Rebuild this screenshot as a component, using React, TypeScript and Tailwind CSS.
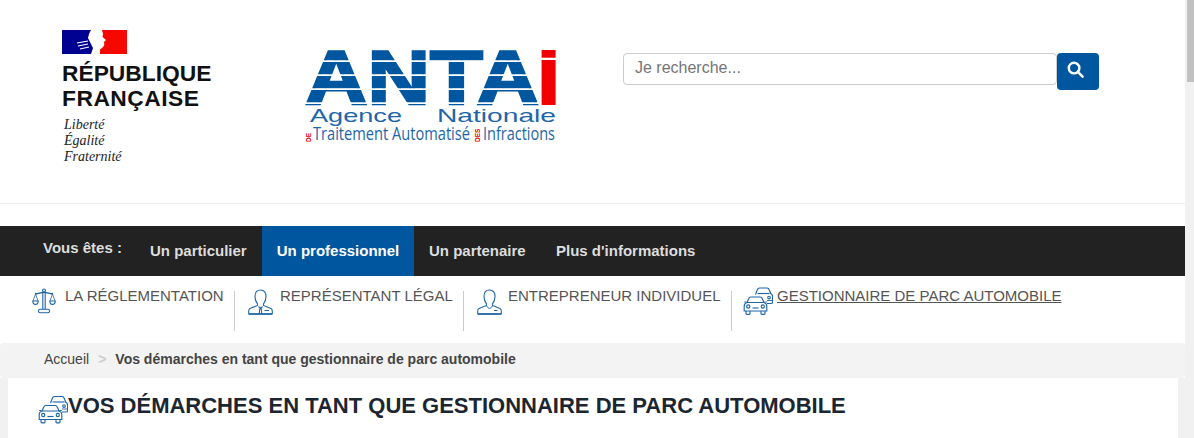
import React from "react";

const blue = "#0057a0";

function Scales({ className }: { className?: string }) {
  return (
    <svg viewBox="0 0 24 26" className={className} fill="none" stroke="#1f66a8" strokeWidth="1.1">
      <circle cx="12" cy="2.5" r="1.5" />
      <path d="M3 5.5 C7 6.5 9 4.2 12 4.2 C15 4.2 17 6.5 21 5.5" strokeWidth="1.4" />
      <path d="M10.8 5 L10.8 21 M13.2 5 L13.2 21" />
      <path d="M3.5 6 L1 13 M3.5 6 L6 13 M20.5 6 L18 13 M20.5 6 L23 13" strokeWidth="0.8" />
      <path d="M0.8 13 H6.2 C6.2 17.5 0.8 17.5 0.8 13Z M17.8 13 H23.2 C23.2 17.5 17.8 17.5 17.8 13Z" />
      <rect x="6.5" y="21.2" width="11" height="3.6" rx="1.6" />
    </svg>
  );
}

function Person({ tie, className }: { tie?: boolean; className?: string }) {
  return (
    <svg viewBox="0 0 25 26" className={className} fill="none" stroke="#1f66a8" strokeWidth="1.1">
      <path d="M12.5 1 C8.5 1 7 4 7 7.5 C7 11 8.5 13.5 9.5 14.8 V16.5 L2 19.5 C1 20 0.7 21 0.7 22 V25 H24.3 V22 C24.3 21 24 20 23 19.5 L15.5 16.5 V14.8 C16.5 13.5 18 11 18 7.5 C18 4 16.5 1 12.5 1Z" />
      {tie ? (
        <path d="M10.5 17.5 L12.5 19.5 L14.5 17.5 M11.2 25 L11.8 20 H13.2 L13.8 25 M16.5 21.5 H21" />
      ) : (
        <path d="M9.5 17 L12.5 20 L15.5 17 M17 21.5 H20.5" strokeWidth="1" />
      )}
      <path d="M1 25 H24" strokeWidth="1.6" />
    </svg>
  );
}

function Cars({ className }: { className?: string }) {
  return (
    <svg viewBox="0 0 30 28" className={className} fill="none" stroke="#1f66a8" strokeWidth="1.15">
      <path d="M12.5 7.5 L14.2 3 C14.5 2 15.3 1 16.5 1 H24 C25.2 1 26 2 26.3 3 L27.6 6.5 C28.8 7 29.5 8 29.5 9.5 V15.5 C29.5 16.2 29 16.5 28.4 16.5 H24" />
      <path d="M14.5 6.5 H26.5" />
      <circle cx="26" cy="10.5" r="1.3" />
      <path d="M24 13.5 H29.4" strokeWidth="0.9" />
      <path d="M4 15.5 L5.8 11.5 C6.1 10.6 6.9 10 7.9 10 H17.1 C18.1 10 18.9 10.6 19.2 11.5 L21 15.5 C22.6 16 23.8 17.2 23.8 19 V24 H1.2 V19 C1.2 17.2 2.4 16 4 15.5Z" />
      <path d="M4 15.5 H21 M1.2 15 H3.5 M21.5 15 H23.8" />
      <path d="M3 24 V26.5 C3 27 3.3 27.3 3.8 27.3 H6.2 C6.7 27.3 7 27 7 26.5 V24 M18 24 V26.5 C18 27 18.3 27.3 18.8 27.3 H21.2 C21.7 27.3 22 27 22 26.5 V24" />
      <circle cx="5.2" cy="19.5" r="1.6" />
      <circle cx="19.8" cy="19.5" r="1.6" />
      <path d="M9.5 21 H15.5" />
    </svg>
  );
}

function RfLogo() {
  return (
    <div className="flex flex-col w-[160px] pl-[1px]">
      <svg viewBox="0 0 65 24" className="w-[65px] h-[24px]">
        <rect x="0" y="0" width="32" height="24" fill="#000091" />
        <rect x="38" y="0" width="27" height="24" fill="#f60700" />
        <path d="M29 0 L40 0 L41 4 L40.5 7 L44 10 L42 12 L42.3 15 L41 17 L37.5 20 L36 24 L29 24 L31 18 L28 12 L26 8 L27 4 Z" fill="#fff" />
        <path d="M15 13 L26 11 M16 16 L26 14 M18 19 L27 17" stroke="#fff" strokeWidth="1.1" />
      </svg>
      <div className="mt-[7px] font-bold text-[22.8px] leading-[25px] text-[#111]">
        RÉPUBLIQUE
        <br />
        <span className="tracking-[0.5px]">FRANÇAISE</span>
      </div>
      <div className="mt-[6px] pl-[2px] font-['Liberation_Serif',serif] italic text-[14px] leading-[16px] text-[#222]">
        Liberté
        <br />
        Égalité
        <br />
        Fraternité
      </div>
    </div>
  );
}

function AntaiLogo() {
  return (
    <svg viewBox="0 -15 270 115" className="w-[270px] h-[115px]">
      <defs>
        <pattern id="stripes" width="10" height="14" patternUnits="userSpaceOnUse" y="1">
          <rect width="10" height="12.2" fill={blue} />
        </pattern>
      </defs>
      <text x="1" y="57" textLength="234" lengthAdjust="spacingAndGlyphs" fontFamily="Liberation Sans" fontWeight="700" fontSize="76" fill="url(#stripes)" stroke="url(#stripes)" strokeWidth="2.5">
        ANTA
      </text>
      <rect x="237.6" y="3" width="14" height="7.7" fill="#f00000" />
      <rect x="237.6" y="13" width="14" height="45" fill="#f00000" />
      <text x="6" y="74.5" textLength="92" lengthAdjust="spacingAndGlyphs" fontFamily="Liberation Sans" fontSize="18.5" fill="#1f66a8">
        Agence
      </text>
      <text x="133" y="74.5" textLength="119" lengthAdjust="spacingAndGlyphs" fontFamily="Liberation Sans" fontSize="18.5" fill="#1f66a8">
        Nationale
      </text>
      <text x="9" y="93" textLength="157" lengthAdjust="spacingAndGlyphs" fontFamily="Open Sans" fontSize="18" fill="#1f66a8">
        Traitement Automatisé
      </text>
      <text x="179" y="93" textLength="72" lengthAdjust="spacingAndGlyphs" fontFamily="Open Sans" fontSize="18" fill="#1f66a8">
        Infractions
      </text>
      <text x="0" y="0" transform="translate(7 95) rotate(-90)" fontFamily="Liberation Sans" fontWeight="700" fontSize="6.5" fill="#e00000">
        DE
      </text>
      <text x="0" y="0" transform="translate(176 95) rotate(-90)" fontFamily="Liberation Sans" fontWeight="700" fontSize="6.5" fill="#e00000">
        DES
      </text>
    </svg>
  );
}

function SubItem({
  icon,
  label,
  active,
  border,
  className,
}: {
  icon: React.ReactNode;
  label: string;
  active?: boolean;
  border?: boolean;
  className?: string;
}) {
  return (
    <div className={`flex items-start h-[40px] ${border ? "border-r border-[#ccc]" : ""} ${className ?? ""}`}>
      {icon}
      <a className={`text-[15px] leading-[20px] -mt-[5px] whitespace-nowrap text-[#555] ${active ? "underline" : ""}`}>{label}</a>
    </div>
  );
}

export default function App() {
  return (
    <div className="flex h-[438px] w-[1194px] overflow-hidden bg-white font-['Liberation_Sans',Arial,sans-serif]">
      <div className="flex-1 min-w-0 flex flex-col">
        <header className="h-[204px] shrink-0 border-b border-[#eee] flex items-start">
          <div className="ml-[61px] mt-[30px]">
            <RfLogo />
          </div>
          <div className="ml-[83px] mt-[32px]">
            <AntaiLogo />
          </div>
          <div className="ml-[49px] mt-[53px] flex items-start">
            <div className="w-[434px] h-[32px] border border-[#ccc] rounded-[4px] pl-[11px] text-[16px] leading-[28px] text-[#757575]">
              Je recherche...
            </div>
            <button className="w-[42px] h-[37px] rounded-[4px] bg-[#0057a0] flex items-center justify-center pb-[4px] pr-[6px]">
              <svg viewBox="0 0 18 18" className="w-[17px] h-[17px]" fill="none" stroke="#fff" strokeWidth="2.6">
                <circle cx="7.5" cy="7.5" r="5.6" />
                <path d="M11.5 11.5 L16.5 16.5" strokeLinecap="round" />
              </svg>
            </button>
          </div>
        </header>

        <nav className="mt-[22px] h-[50px] shrink-0 bg-[#222] flex items-stretch pl-[43px] font-bold text-[15px]">
          <span className="mt-[11px] w-[92px] text-[#ddd]">Vous êtes :</span>
          <a className="w-[127px] pl-[15px] leading-[50px] text-[#ddd]">Un particulier</a>
          <a className="w-[152px] text-center leading-[50px] text-white bg-[#0057a0]">Un professionnel</a>
          <a className="w-[127px] pl-[15px] leading-[50px] text-[#ddd]">Un partenaire</a>
          <a className="pl-[15px] leading-[50px] text-[#ddd]">Plus d'informations</a>
        </nav>

        <div className="h-[67px] shrink-0 flex items-start pt-[15px] pl-[32px]">
          <SubItem
            icon={<Scales className="w-[24px] h-[26px] shrink-0 mt-[-3px] mr-[9px]" />}
            label="LA RÉGLEMENTATION"
            border
            className="w-[203px]"
          />
          <SubItem
            icon={<Person tie className="w-[25px] h-[26px] shrink-0 mt-[-2px] mr-[7px]" />}
            label="REPRÉSENTANT LÉGAL"
            border
            className="w-[229px] pl-[13px]"
          />
          <SubItem
            icon={<Person className="w-[25px] h-[26px] shrink-0 mt-[-2px] mr-[6px]" />}
            label="ENTREPRENEUR INDIVIDUEL"
            border
            className="w-[268px] pl-[13px]"
          />
          <SubItem
            icon={<Cars className="w-[30px] h-[28px] shrink-0 mt-[-4px] mr-[4px]" />}
            label="GESTIONNAIRE DE PARC AUTOMOBILE"
            active
            className="pl-[11px]"
          />
        </div>

        <div className="h-[35px] shrink-0 bg-[#f3f3f3] rounded-[4px] flex items-center pl-[44px] pb-[2px] text-[14px] text-[#444]">
          <span>Accueil</span>
          <span className="px-[9px] text-[#ccc] font-bold">&gt;</span>
          <span className="font-bold">Vos démarches en tant que gestionnaire de parc automobile</span>
        </div>

        <div className="flex-1 bg-[#f1f1f1] pl-[8px] pr-[7px]">
          <div className="h-full bg-white flex items-start pl-[30px] pt-[15px]">
            <Cars className="w-[30px] h-[29px] shrink-0 mt-[2px]" />
            <h1 className="font-bold text-[22px] leading-[26px] text-[#1b2631] whitespace-nowrap">
              VOS DÉMARCHES EN TANT QUE GESTIONNAIRE DE PARC AUTOMOBILE
            </h1>
          </div>
        </div>
      </div>

      <div className="w-[9px] shrink-0 bg-[#f1f1f1] flex justify-end">
        <div className="w-[7px] h-[82px] bg-[#c1c1c1]" />
      </div>
    </div>
  );
}
